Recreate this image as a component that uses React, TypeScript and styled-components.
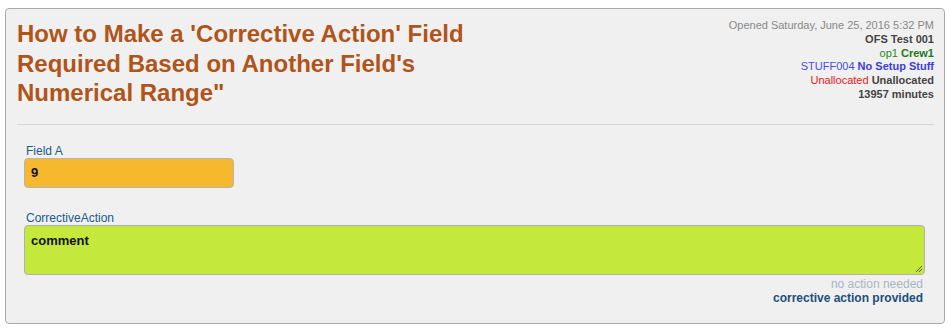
import styled, { createGlobalStyle } from "styled-components";

const Global = createGlobalStyle`
  body {
    margin: 0;
    padding: 8px 5px;
    font-family: "Liberation Sans", Arial, Helvetica, sans-serif;
    background: #ffffff;
  }
`;

const Card = styled.div`
  background: #f0f0f0;
  border: 1px solid #a9a9a9;
  border-radius: 4px;
  padding: 0 10px 0 11px;
  height: 316px;
  box-sizing: border-box;
`;

const Header = styled.div`
  display: flex;
  justify-content: space-between;
  align-items: flex-start;
  padding: 10px 0 16px 0;
  border-bottom: 1px solid #d6d6d6;
`;

const Title = styled.h1`
  margin: 0;
  font-size: 24px;
  line-height: 29.5px;
  font-weight: bold;
  color: #b05419;
  width: 470px;
`;

const Meta = styled.div`
  text-align: right;
  font-size: 11px;
  line-height: 13.8px;
  color: #444;
`;

const MetaLine = styled.div<{ $muted?: boolean }>`
  color: ${(p) => (p.$muted ? "#888" : "#444")};
`;

const Strong = styled.b<{ $color?: string }>`
  color: ${(p) => p.$color || "#444"};
`;

const Tone = styled.span<{ $color: string }>`
  color: ${(p) => p.$color};
`;

const Body = styled.div`
  padding: 20px 9px 0 7px;
`;

const Group = styled.div<{ $gap?: number }>`
  margin-bottom: ${(p) => p.$gap ?? 0}px;
`;

const Label = styled.div`
  font-size: 12px;
  line-height: 13px;
  color: #215a8a;
  margin-left: 2px;
`;

const InputBox = styled.div`
  width: 210px;
  height: 30px;
  box-sizing: border-box;
  background: #f6b82d;
  border: 1px solid #b5b5b5;
  border-radius: 4px;
  padding: 6px 6px;
  font-size: 13px;
  font-weight: bold;
  color: #111;
`;

const AreaBox = styled.div`
  position: relative;
  height: 50px;
  box-sizing: border-box;
  background: #c5e83c;
  border: 1px solid #b0b0b0;
  border-radius: 4px;
  padding: 7px 6px;
  font-size: 13px;
  font-weight: bold;
  color: #111;
`;

const Grip = styled.svg`
  position: absolute;
  right: 1px;
  bottom: 1px;
`;

const Status = styled.div`
  text-align: right;
  font-size: 12px;
  line-height: 14px;
  padding: 2px 2px 0 0;
`;

const Note = styled.div<{ $on?: boolean }>`
  color: ${(p) => (p.$on ? "#1d4f7c" : "#a8b6c6")};
  font-weight: ${(p) => (p.$on ? "bold" : "normal")};
`;

export default function App() {
  return (
    <>
      <Global />
      <Card>
        <Header>
          <Title>
            How to Make a 'Corrective Action' Field Required Based on Another
            Field's Numerical Range"
          </Title>
          <Meta>
            <MetaLine $muted>Opened Saturday, June 25, 2016 5:32 PM</MetaLine>
            <MetaLine>
              <Strong>OFS Test 001</Strong>
            </MetaLine>
            <MetaLine>
              <Tone $color="#1e8a1e">op1</Tone> <Strong $color="#1a7a1a">Crew1</Strong>
            </MetaLine>
            <MetaLine>
              <Tone $color="#4a4ae0">STUFF004</Tone>{" "}
              <Strong $color="#3c3ce0">No Setup Stuff</Strong>
            </MetaLine>
            <MetaLine>
              <Tone $color="#e02020">Unallocated</Tone> <Strong>Unallocated</Strong>
            </MetaLine>
            <MetaLine>
              <Strong>13957 minutes</Strong>
            </MetaLine>
          </Meta>
        </Header>
        <Body>
          <Group $gap={24}>
            <Label>Field A</Label>
            <InputBox>9</InputBox>
          </Group>
          <Group>
            <Label>CorrectiveAction</Label>
            <AreaBox>
              comment
              <Grip width="9" height="9" viewBox="0 0 9 9">
                <path d="M8 2 L2 8 M8 5 L5 8" stroke="#555" strokeWidth="1" />
              </Grip>
            </AreaBox>
          </Group>
          <Status>
            <Note>no action needed</Note>
            <Note $on>corrective action provided</Note>
          </Status>
        </Body>
      </Card>
    </>
  );
}
